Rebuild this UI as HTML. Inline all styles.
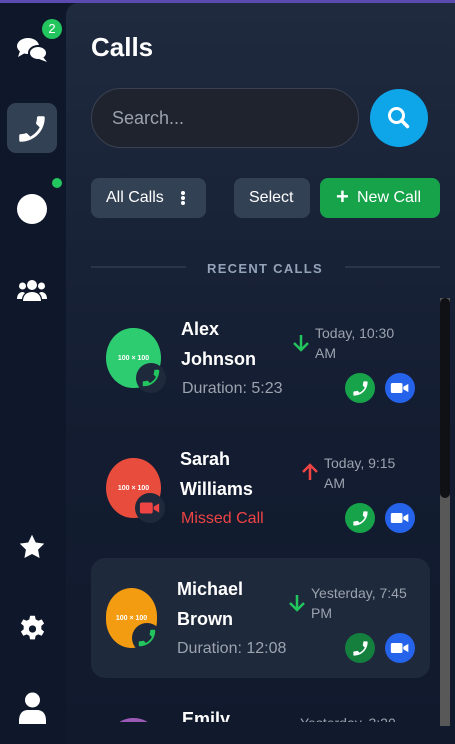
<!DOCTYPE html>
<html><head><meta charset="utf-8"><style>
*{margin:0;padding:0;box-sizing:border-box}
body{width:455px;height:744px;overflow:hidden;background:#0f172a;font-family:"Liberation Sans",sans-serif;position:relative;color:#fff}
.top{position:absolute;left:0;top:0;width:455px;height:3px;background:#5b4bb0}
.side{position:absolute;left:0;top:3px;width:66px;height:741px;background:#0f172a}
.panel{position:absolute;left:66px;top:3px;width:389px;height:741px;border-top-left-radius:12px;background:linear-gradient(#1f2a3e,#131c30 60%,#111a2d)}
.abs{position:absolute}
.ph{fill:#fff}
.name{position:absolute;font-size:18px;font-weight:bold;line-height:30px;color:#fff}
.dur{position:absolute;font-size:16px;color:#9ca3af}
.time{position:absolute;font-size:14px;color:#9ca3af;line-height:20px}
.btn{position:absolute;width:30px;height:30px;border-radius:50%;display:flex;align-items:center;justify-content:center}
.av{position:absolute;width:55px;height:60px;border-radius:27px/30px;font-size:7px;font-weight:bold;color:#fff;display:flex;align-items:center;justify-content:center}
.badge{position:absolute;width:30px;height:30px;border-radius:50%;background:#1e293b;display:flex;align-items:center;justify-content:center}
</style></head><body>
<div class="top"></div>
<div class="side">
 <svg class="abs" style="left:16px;top:32px" width="32" height="28" viewBox="0 0 32 28"><ellipse cx="12" cy="11" rx="11" ry="8" fill="#fff"/><path d="M4 16 L2 22 L9 18Z" fill="#fff"/><ellipse cx="22" cy="18" rx="9" ry="7" fill="#fff" stroke="#0f172a" stroke-width="2"/><path d="M27 22 L31 27 L23 24Z" fill="#fff"/></svg>
 <div class="abs" style="left:42px;top:16px;width:20px;height:20px;border-radius:50%;background:#22c55e;font-size:13px;text-align:center;line-height:20px">2</div>
 <div class="abs" style="left:7px;top:100px;width:50px;height:50px;border-radius:9px;background:#334155"></div>
 <svg class="abs" style="left:15px;top:109px" width="34" height="34" viewBox="0 0 24 24"><g transform="translate(24,0) scale(-1,1)"><path class="ph" d="M6.6 10.8c1.4 2.8 3.8 5.1 6.6 6.6l2.2-2.2c.3-.3.7-.4 1-.2 1.1.4 2.3.6 3.6.6.6 0 1 .4 1 1V20c0 .6-.4 1-1 1C10.6 21 3 13.4 3 4c0-.6.4-1 1-1h3.5c.6 0 1 .4 1 1 0 1.3.2 2.5.6 3.6.1.3 0 .7-.2 1L6.6 10.8z"/></g></svg>
 <div class="abs" style="left:17px;top:191px;width:30px;height:30px;border-radius:50%;background:#fff"></div>
 <div class="abs" style="left:52px;top:175px;width:10px;height:10px;border-radius:50%;background:#22c55e"></div>
 <svg class="abs" style="left:17px;top:276px" width="30" height="24" viewBox="0 0 30 24"><circle cx="15" cy="6" r="5" fill="#fff"/><circle cx="5.5" cy="7" r="3.5" fill="#fff"/><circle cx="24.5" cy="7" r="3.5" fill="#fff"/><path d="M6 22c0-6 4-9 9-9s9 3 9 9z" fill="#fff"/><path d="M0 20c0-4 2-7 6-7l2 1c-2 2-3 4-3 6z" fill="#fff"/><path d="M30 20c0-4-2-7-6-7l-2 1c2 2 3 4 3 6z" fill="#fff"/></svg>
 <svg class="abs" style="left:18px;top:530px" width="28" height="28" viewBox="0 0 24 24"><path d="M12 1.5l3.2 6.6 7.3 1-5.3 5.1 1.3 7.2L12 18l-6.5 3.4 1.3-7.2L1.5 9.1l7.3-1z" fill="#fff"/></svg>
 <svg class="abs" style="left:18px;top:611px" width="29" height="30" viewBox="0 0 24 24"><path fill="#fff" fill-rule="evenodd" d="M10 1h4l.6 3 2.2 1.2 2.8-1.2 2 3.4-2.3 2v2.8l2.3 2-2 3.4-2.8-1.2-2.2 1.2-.6 3h-4l-.6-3-2.2-1.2-2.8 1.2-2-3.4 2.3-2v-2.8l-2.3-2 2-3.4 2.8 1.2L9.4 4zM12 9a3 3 0 1 0 0 6 3 3 0 0 0 0-6z"/></svg>
 <svg class="abs" style="left:19px;top:688px" width="27" height="34" viewBox="0 0 27 34"><circle cx="13.5" cy="9" r="7.5" fill="#fff"/><path d="M0 30c0-8 4-11 9-11h9c5 0 9 3 9 11v3H0z" fill="#fff"/></svg>
</div>
<div class="panel"></div>
<div class="abs" style="left:91px;top:32px;font-size:26px;font-weight:bold">Calls</div>
<div class="abs" style="left:91px;top:88px;width:268px;height:60px;border-radius:30px;background:#1e232e;border:1px solid #3a4150"></div>
<div class="abs" style="left:112px;top:108px;font-size:18px;color:#9ca3af">Search...</div>
<div class="abs" style="left:370px;top:89px;width:58px;height:58px;border-radius:50%;background:#0ea5e9"></div>
<svg class="abs" style="left:386px;top:105px" width="26" height="26" viewBox="0 0 26 26"><circle cx="10.5" cy="10.5" r="7" fill="none" stroke="#fff" stroke-width="3"/><path d="M15.5 15.5l6 6" stroke="#fff" stroke-width="3.5" stroke-linecap="round"/></svg>
<div class="abs" style="left:91px;top:178px;width:115px;height:40px;border-radius:8px;background:#334155"></div>
<div class="abs" style="left:106px;top:189px;font-size:16px">All Calls</div>
<div class="abs" style="left:181px;top:191px;width:4px;height:4px;border-radius:50%;background:#fff;box-shadow:0 5px 0 #fff,0 10px 0 #fff"></div>
<div class="abs" style="left:234px;top:178px;width:76px;height:40px;border-radius:8px;background:#334155"></div>
<div class="abs" style="left:249px;top:189px;font-size:16px">Select</div>
<div class="abs" style="left:320px;top:178px;width:120px;height:40px;border-radius:8px;background:#16a34a"></div>
<div class="abs" style="left:336px;top:186px;font-size:22px;font-weight:bold;line-height:22px">+</div>
<div class="abs" style="left:357px;top:189px;font-size:16px">New Call</div>
<div class="abs" style="left:91px;top:266px;width:95px;height:2px;background:#2b3547"></div>
<div class="abs" style="left:345px;top:266px;width:95px;height:2px;background:#2b3547"></div>
<div class="abs" style="left:207px;top:261px;font-size:13px;font-weight:bold;letter-spacing:1.3px;color:#94a3b8">RECENT CALLS</div>

<div class="abs" style="left:440px;top:298px;width:10px;height:428px;background:#585858"></div>
<div class="abs" style="left:440px;top:298px;width:10px;height:200px;border-radius:5px;background:#0f1115"></div>

<svg width="0" height="0" style="position:absolute"><defs>
<path id="ph" d="M6.6 10.8c1.4 2.8 3.8 5.1 6.6 6.6l2.2-2.2c.3-.3.7-.4 1-.2 1.1.4 2.3.6 3.6.6.6 0 1 .4 1 1V20c0 .6-.4 1-1 1C10.6 21 3 13.4 3 4c0-.6.4-1 1-1h3.5c.6 0 1 .4 1 1 0 1.3.2 2.5.6 3.6.1.3 0 .7-.2 1L6.6 10.8z" transform="translate(24,0) scale(-1,1)"/>
<g id="vid"><rect x="1" y="6" width="14" height="12" rx="2"/><path d="M16 10.5l6-3.5v10l-6-3.5z"/></g>
</defs></svg>

<div style="position:absolute;left:0;top:0;width:440px;height:722px;overflow:hidden">
<div class="av" style="left:106px;top:328px;background:#2ecc71">100 × 100</div>
<div class="badge" style="left:136px;top:363px"><svg width="22" height="22" viewBox="0 0 24 24"><use href="#ph" fill="#22c55e"/></svg></div>
<div class="name" style="left:181px;top:314px">Alex<br>Johnson</div>
<div class="dur" style="left:182px;top:380px">Duration: 5:23</div>
<svg class="abs" style="left:292px;top:333px" width="18" height="20" viewBox="0 0 18 20"><path d="M9 2v15M2 10l7 7 7-7" stroke="#22c55e" stroke-width="2.5" fill="none"/></svg>
<div class="time" style="left:315px;top:323px">Today, 10:30<br>AM</div>
<div class="btn" style="left:345px;top:373px;background:#16a34a"><svg width="19" height="19" viewBox="0 0 24 24"><use href="#ph" fill="#fff"/></svg></div>
<div class="btn" style="left:385px;top:373px;background:#2563eb"><svg width="20" height="20" viewBox="0 0 24 24"><use href="#vid" fill="#fff"/></svg></div>

<div class="av" style="left:106px;top:458px;background:#e74c3c">100 × 100</div>
<div class="badge" style="left:135px;top:493px"><svg width="22" height="22" viewBox="0 0 24 24"><use href="#vid" fill="#ef4444"/></svg></div>
<div class="name" style="left:180px;top:444px">Sarah<br>Williams</div>
<div class="dur" style="left:181px;top:510px;color:#ef4444">Missed Call</div>
<svg class="abs" style="left:301px;top:462px" width="18" height="20" viewBox="0 0 18 20"><path d="M9 18V3M2 10l7-7 7 7" stroke="#ef4444" stroke-width="2.5" fill="none"/></svg>
<div class="time" style="left:324px;top:453px">Today, 9:15<br>AM</div>
<div class="btn" style="left:345px;top:503px;background:#16a34a"><svg width="19" height="19" viewBox="0 0 24 24"><use href="#ph" fill="#fff"/></svg></div>
<div class="btn" style="left:385px;top:503px;background:#2563eb"><svg width="20" height="20" viewBox="0 0 24 24"><use href="#vid" fill="#fff"/></svg></div>

<div class="abs" style="left:91px;top:558px;width:339px;height:120px;border-radius:14px;background:#1e293b"></div>
<div class="av" style="left:106px;top:588px;width:51px;background:#f39c12">100 × 100</div>
<div class="badge" style="left:132px;top:623px"><svg width="22" height="22" viewBox="0 0 24 24"><use href="#ph" fill="#22c55e"/></svg></div>
<div class="name" style="left:177px;top:574px">Michael<br>Brown</div>
<div class="dur" style="left:177px;top:640px">Duration: 12:08</div>
<svg class="abs" style="left:288px;top:593px" width="18" height="20" viewBox="0 0 18 20"><path d="M9 2v15M2 10l7 7 7-7" stroke="#22c55e" stroke-width="2.5" fill="none"/></svg>
<div class="time" style="left:311px;top:583px">Yesterday, 7:45<br>PM</div>
<div class="btn" style="left:345px;top:633px;background:#15803d"><svg width="19" height="19" viewBox="0 0 24 24"><use href="#ph" fill="#fff"/></svg></div>
<div class="btn" style="left:385px;top:633px;background:#2563eb"><svg width="20" height="20" viewBox="0 0 24 24"><use href="#vid" fill="#fff"/></svg></div>

<div class="av" style="left:106px;top:718px;background:#9b59b6"></div>
<div class="name" style="left:182px;top:704px">Emily</div>
<div class="time" style="left:300px;top:713px">Yesterday, 3:20</div>
</div>
</body></html>
